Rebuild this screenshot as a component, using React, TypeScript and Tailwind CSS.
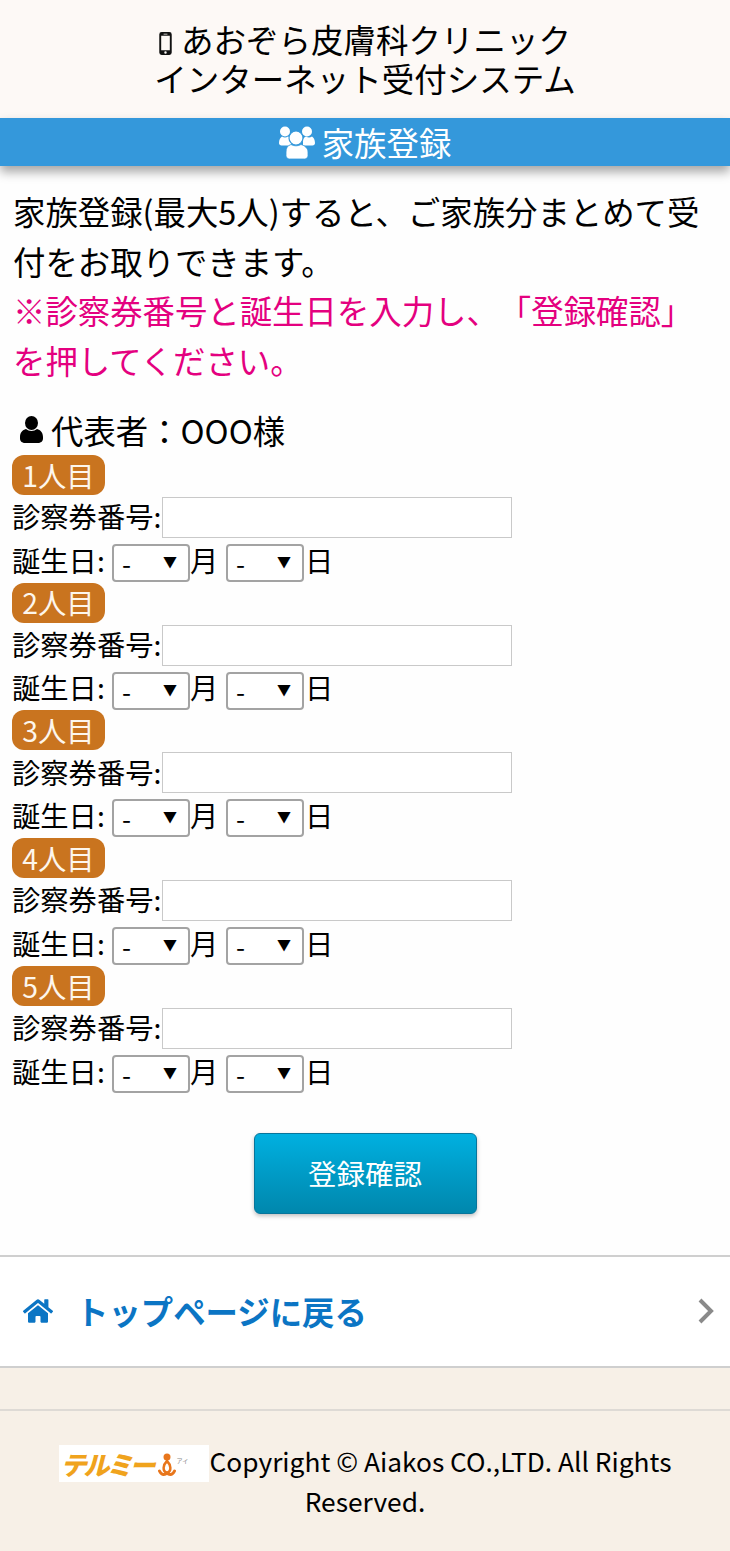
import { FaHome } from 'react-icons/fa'

const jp = `font-['Noto_Sans_CJK_JP',sans-serif]`

const people = ['1人目', '2人目', '3人目', '4人目', '5人目']

function DateSelect() {
  return (
    <span className="relative inline-block h-[38px] w-[78px] shrink-0">
      <select className="h-full w-full appearance-none rounded-[4px] border-2 border-[#a3a3a3] bg-white pl-[8px] text-[26px] leading-[30px] text-black outline-none">
        <option>-</option>
      </select>
      <span className="pointer-events-none absolute right-[13px] top-[5px] text-[14px] leading-[24px] text-black">▼</span>
    </span>
  )
}

function PersonRow({ label }: { label: string }) {
  return (
    <div className="ml-[-1px] pb-[0.75px]">
      <div className="flex h-[40px] w-[93px] items-center justify-center rounded-[12px] bg-[#c9741f] text-[28.3px] leading-none text-[#fdf6ec]">
        {label}
      </div>
      <div className="mt-[2px] flex h-[41px] items-center text-[28.3px] leading-none text-black">
        <span className="mt-[-2px] w-[150px] shrink-0 whitespace-nowrap">診察券番号:</span>
        <input className="h-[41px] w-[350px] border border-[#c9c9c9] bg-white outline-none" />
      </div>
      <div className="mt-[6px] flex h-[38px] items-center text-[28.3px] leading-none text-black">
        <span className="mt-[-6px] w-[100px] shrink-0 whitespace-nowrap">誕生日:</span>
        <DateSelect />
        <span className="mt-[-6px] w-[36px] shrink-0">月</span>
        <DateSelect />
        <span className="ml-[1px] mt-[-6px]">日</span>
      </div>
    </div>
  )
}

function PhoneIcon() {
  return (
    <svg width="13" height="23" viewBox="0 0 13 24" className="mr-[9px] inline-block align-[-2px]">
      <path fillRule="evenodd" fill="#111" d="M2.5 0h8A2.5 2.5 0 0 1 13 2.5v19a2.5 2.5 0 0 1-2.5 2.5h-8A2.5 2.5 0 0 1 0 21.500v-19A2.500 2.500 0 0 1 2.500 0ZM2 4v15h9V4ZM4.500 1.700v1h4v-1ZM6.500 20a1.300 1.300 0 1 0 0 2.600 1.300 1.300 0 0 0 0-2.600Z" />
    </svg>
  )
}

function UsersIcon() {
  return (
    <svg width="36" height="33" viewBox="0 0 36 33" fill="white" className="mr-[7px]">
      <circle cx="6" cy="5.500" r="5" />
      <circle cx="28" cy="5.500" r="5" />
      <path d="M0 17c0-3.500 1.500-5.500 3-6.500 2 1.300 4 1.300 6 0 1.500.5 2.500 1.500 3 3v6H2.500C1 19.500 0 18.500 0 17Z" />
      <path d="M36 17c0-3.500-1.500-5.500-3-6.500-2 1.300-4 1.300-6 0-1.500.5-2.500 1.500-3 3v6h9.500c1.500 0 2.500-1 2.500-2.500Z" />
      <circle cx="17" cy="12" r="7" stroke="#3498db" strokeWidth="1.200" />
      <path d="M7 26c0-4 1.500-6.500 5-7.500 3 1.800 7 1.800 10 0 3.500 1 7 3.500 7 7.500v3.500c0 2-1.500 3.500-3.500 3.500h-15C8.500 33 7 31.500 7 29.500Z" stroke="#3498db" strokeWidth="0.800" />
    </svg>
  )
}

function UserIcon() {
  return (
    <svg width="23" height="27" viewBox="0 0 23 27" fill="black" className="mr-[8px] shrink-0">
      <ellipse cx="11.500" cy="7" rx="6.500" ry="7" />
      <path d="M0 21c0-4.500 2.500-7 6-8 1.500 1.300 3.500 2 5.500 2s4-.7 5.500-2c3.500 1 6 3.500 6 8v1.500c0 3-2.500 4.500-5 4.500H5c-2.500 0-5-1.500-5-4.500Z" />
    </svg>
  )
}

function Logo() {
  return (
    <span className="my-[-6px] mr-[1px] inline-flex h-[37px] w-[150px] items-center overflow-hidden bg-white pl-[2px] align-[-3px]">
      <span className="shrink-0 text-[26px] font-black italic leading-none tracking-[-3px] text-[#f0a31d]">テルミー</span>
      <svg width="18" height="24" viewBox="0 0 18 24" className="ml-[5px] mt-[2px] shrink-0">
        <circle cx="9" cy="4" r="3.500" fill="#e8761c" />
        <path d="M9 8C5 12 4 18 9 20c5-2 4-8 0-12Z" fill="none" stroke="#e8761c" strokeWidth="2.500" />
        <path d="M1.500 18c2 4.500 5.500 4 7.500 2 2 2 5.500 2.500 7.500-2" fill="none" stroke="#e8761c" strokeWidth="3" strokeLinecap="round" />
      </svg>
      <span className="ml-[1px] mt-[-6px] whitespace-nowrap text-[6px] leading-none text-[#888]">アイ</span>
    </span>
  )
}

export default function App() {
  return (
    <div className={`${jp} h-[1551px] w-[730px] overflow-hidden bg-[#fefefe] text-black [text-spacing-trim:space-all]`}>
      <header className="h-[118px] bg-[#fdf9f6] pt-[20px] text-center text-[32.5px] leading-[38.5px]">
        <div>
          <PhoneIcon />
          あおぞら皮膚科クリニック
        </div>
        <div>インターネット受付システム</div>
      </header>

      <div className="flex h-[48px] items-center justify-center bg-[#3498db] text-[32.4px] leading-none text-white shadow-[0_6px_10px_rgba(0,0,0,0.35)]">
        <UsersIcon />
        家族登録
      </div>

      <section className="px-[13px]">
        <p className="mt-[20px] text-[32.4px] leading-[49.7px]">
          家族登録(最大5人)すると、ご家族分まとめて受付をお取りできます。
          <br />
          <span className="text-[#e4007f]">※診察券番号と誕生日を入力し、「登録確認」を押してください。</span>
        </p>

        <div className="mt-[23px] flex h-[44px] items-center pl-[7px] text-[32.4px] leading-none">
          <UserIcon />
          代表者：OOO様
        </div>

        <div className="mt-[3px]">
          {people.map((p) => (
            <PersonRow key={p} label={p} />
          ))}
        </div>

        <div className="mt-[39px] flex justify-center">
          <button className="h-[81px] w-[223px] rounded-[6px] border border-[#07759b] bg-gradient-to-b from-[#00b0e0] to-[#0087ad] text-[28.5px] text-white shadow-[0_2px_4px_rgba(0,0,0,0.25)]">
            登録確認
          </button>
        </div>
      </section>

      <a className="mt-[41px] flex h-[113px] items-center border-y-2 border-[#cfcfcf] bg-white pl-[23px] pr-[15px] text-[#0b75c4]">
        <FaHome className="text-[30px]" />
        <span className="ml-[23px] text-[32.4px] font-bold leading-none">トップページに戻る</span>
        <svg width="18" height="26" viewBox="0 0 18 26" className="ml-auto">
          <path d="M3 2l11 11L3 24" fill="none" stroke="#8a8a8a" strokeWidth="4" />
        </svg>
      </a>

      <footer className="h-[185px] bg-[#f7f0e7]">
        <div className="h-[43px] border-b-2 border-[#dedad5]" />
        <p className="mt-[30px] px-[13px] text-center text-[26.3px] leading-[40px]">
          <Logo />
          Copyright © Aiakos CO.,LTD. All Rights Reserved.
        </p>
      </footer>
    </div>
  )
}
